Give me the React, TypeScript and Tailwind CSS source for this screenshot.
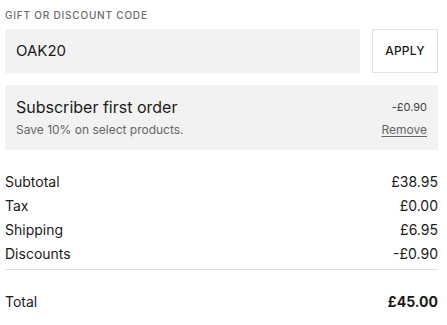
const rows = [
  { label: "Subtotal", value: "£38.95" },
  { label: "Tax", value: "£0.00" },
  { label: "Shipping", value: "£6.95" },
  { label: "Discounts", value: "-£0.90" },
];

export default function App() {
  return (
    <div className="w-[447px] h-[325px] bg-white font-['Inter',sans-serif] text-[#1a1a1a] overflow-hidden">
      <div className="w-[433px] ml-[5px] pt-[8px]">
        {/* Code field */}
        <p className="text-[10px] font-medium tracking-[0.08em] uppercase text-[#6b6b6b] leading-[14px]">
          Gift or discount code
        </p>
        <div className="mt-[7px] flex gap-[12px]">
          <div className="flex-1 h-[44px] bg-[#f2f2f2] flex items-center px-[11px] text-[15px]">
            OAK20
          </div>
          <button className="w-[66px] h-[44px] border border-[#e2e2e2] bg-white text-[12px] font-medium tracking-[0.02em]">
            APPLY
          </button>
        </div>

        {/* Applied discount */}
        <div className="mt-[12px] h-[65px] bg-[#f2f2f2] flex justify-between px-[11px] pt-[11px]">
          <div>
            <p className="text-[16px] leading-[22px]">Subscriber first order</p>
            <p className="mt-[4px] text-[12px] leading-[16px] text-[#666]">Save 10% on select products.</p>
          </div>
          <div className="flex flex-col items-end">
            <p className="text-[11px] leading-[22px] text-[#444]">-£0.90</p>
            <a href="#" className="mt-[4px] text-[12px] leading-[16px] text-[#666] underline underline-offset-2">
              Remove
            </a>
          </div>
        </div>

        {/* Totals */}
        <div className="mt-[20px] flex flex-col">
          {rows.map((r) => (
            <div key={r.label} className="flex justify-between text-[14px] leading-[24px]">
              <span>{r.label}</span>
              <span>{r.value}</span>
            </div>
          ))}
        </div>
        <div className="mt-[3px] border-t border-[#e0e0e0]" />
        <div className="mt-[20px] flex justify-between items-center text-[14px] leading-[24px]">
          <span>Total</span>
          <span className="font-bold">£45.00</span>
        </div>
      </div>
    </div>
  );
}
